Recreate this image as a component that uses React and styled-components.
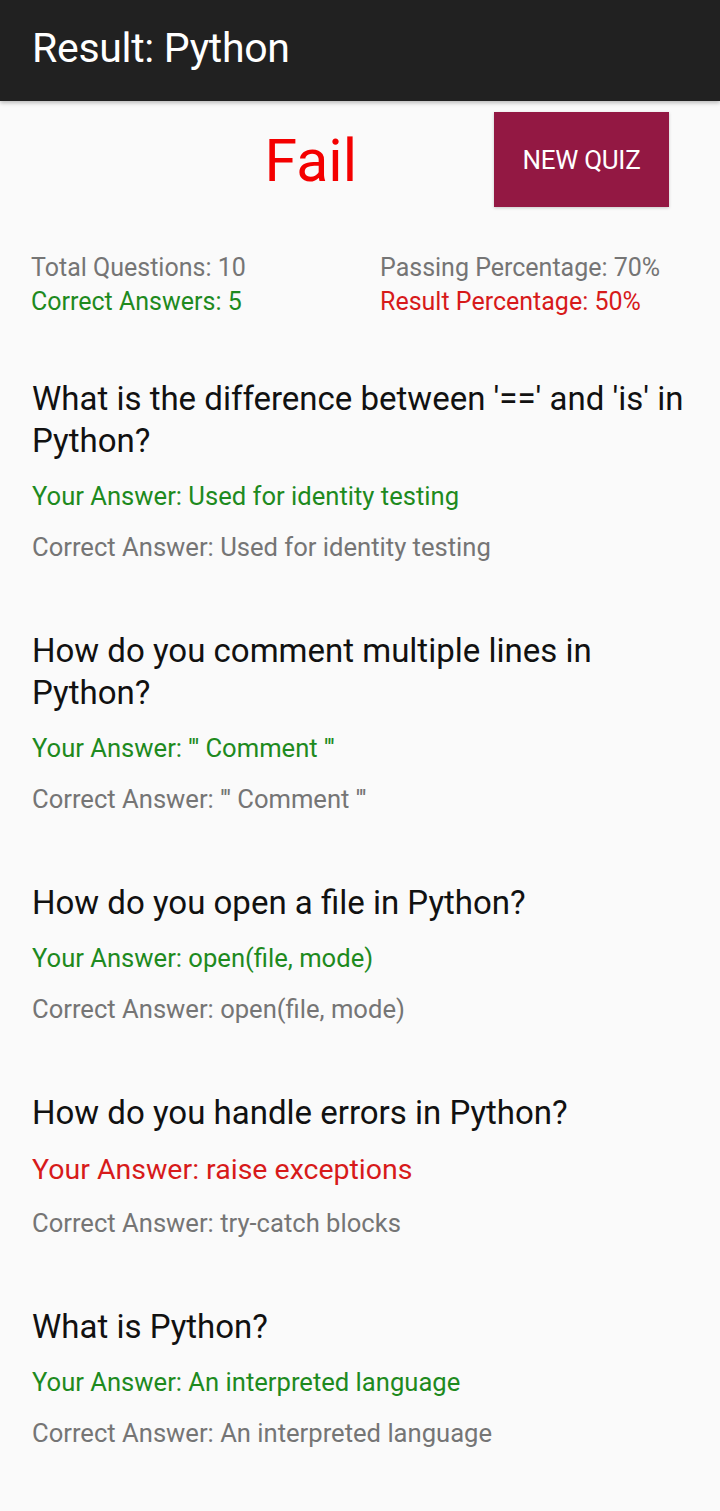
import React from "react";
import styled, { createGlobalStyle } from "styled-components";

const GlobalStyle = createGlobalStyle`
  body {
    margin: 0;
    background: #fafafa;
    font-family: Roboto, "Noto Sans", sans-serif;
  }
`;

const Page = styled.div`
  min-height: 1511px;
  background: #fafafa;
`;

const Header = styled.header`
  height: 101px;
  background: #212121;
  display: flex;
  align-items: center;
  padding: 0 32px;
  box-shadow: 0 2px 4px rgba(0, 0, 0, 0.25);
`;

const Title = styled.h1`
  margin: 0 0 6px;
  color: #fff;
  font-size: 41px;
  font-weight: 400;
  letter-spacing: -0.3px;
`;

const TopRow = styled.div`
  display: flex;
  align-items: center;
  justify-content: flex-end;
  gap: 137px;
  padding: 11px 51px 0 0;
`;

const Verdict = styled.div`
  color: #f40000;
  font-size: 59px;
  line-height: 1;
  padding-top: 2px;
`;

const NewQuizButton = styled.button`
  width: 175px;
  height: 95px;
  border: none;
  background: #931843;
  color: #fff;
  font-family: inherit;
  font-size: 26px;
  letter-spacing: -0.3px;
  box-shadow: 0 1px 3px rgba(0, 0, 0, 0.2);
`;

const Stats = styled.div`
  display: grid;
  grid-template-columns: 349px 1fr;
  padding: 44px 31px 0;
  font-size: 25px;
  line-height: 34px;
`;

const Stat = styled.div`
  color: ${(p) => p.$color || "#757575"};
`;

const QuestionList = styled.div`
  display: flex;
  flex-direction: column;
  gap: 66px;
  padding: 59px 32px 0;
`;

const QuestionBlock = styled.div`
  display: flex;
  flex-direction: column;
  gap: 17px;
`;

const QuestionText = styled.div`
  font-size: 33px;
  line-height: 42px;
  color: #111;
`;

const Answer = styled.div`
  font-size: ${(p) => (p.$wrong ? "28.5px" : "25.6px")};
  line-height: ${(p) => (p.$wrong ? "38px" : "34px")};
  color: ${(p) => p.$color};
`;

const results = [
  {
    q: "What is the difference between '==' and 'is' in Python?",
    yours: "Used for identity testing",
    correct: "Used for identity testing",
  },
  {
    q: "How do you comment multiple lines in Python?",
    yours: "''' Comment '''",
    correct: "''' Comment '''",
  },
  {
    q: "How do you open a file in Python?",
    yours: "open(file, mode)",
    correct: "open(file, mode)",
  },
  {
    q: "How do you handle errors in Python?",
    yours: "raise exceptions",
    correct: "try-catch blocks",
  },
  {
    q: "What is Python?",
    yours: "An interpreted language",
    correct: "An interpreted language",
  },
];

export default function App() {
  return (
    <Page>
      <GlobalStyle />
      <Header>
        <Title>Result: Python</Title>
      </Header>
      <TopRow>
        <Verdict>Fail</Verdict>
        <NewQuizButton>NEW QUIZ</NewQuizButton>
      </TopRow>
      <Stats>
        <Stat>Total Questions: 10</Stat>
        <Stat>Passing Percentage: 70%</Stat>
        <Stat $color="#1e8a1e">Correct Answers: 5</Stat>
        <Stat $color="#d71a1a">Result Percentage: 50%</Stat>
      </Stats>
      <QuestionList>
        {results.map((r) => {
          const wrong = r.yours !== r.correct;
          return (
            <QuestionBlock key={r.q}>
              <QuestionText>{r.q}</QuestionText>
              <Answer $wrong={wrong} $color={wrong ? "#d71a1a" : "#1e8a1e"}>
                Your Answer: {r.yours}
              </Answer>
              <Answer $color="#757575">Correct Answer: {r.correct}</Answer>
            </QuestionBlock>
          );
        })}
      </QuestionList>
    </Page>
  );
}
